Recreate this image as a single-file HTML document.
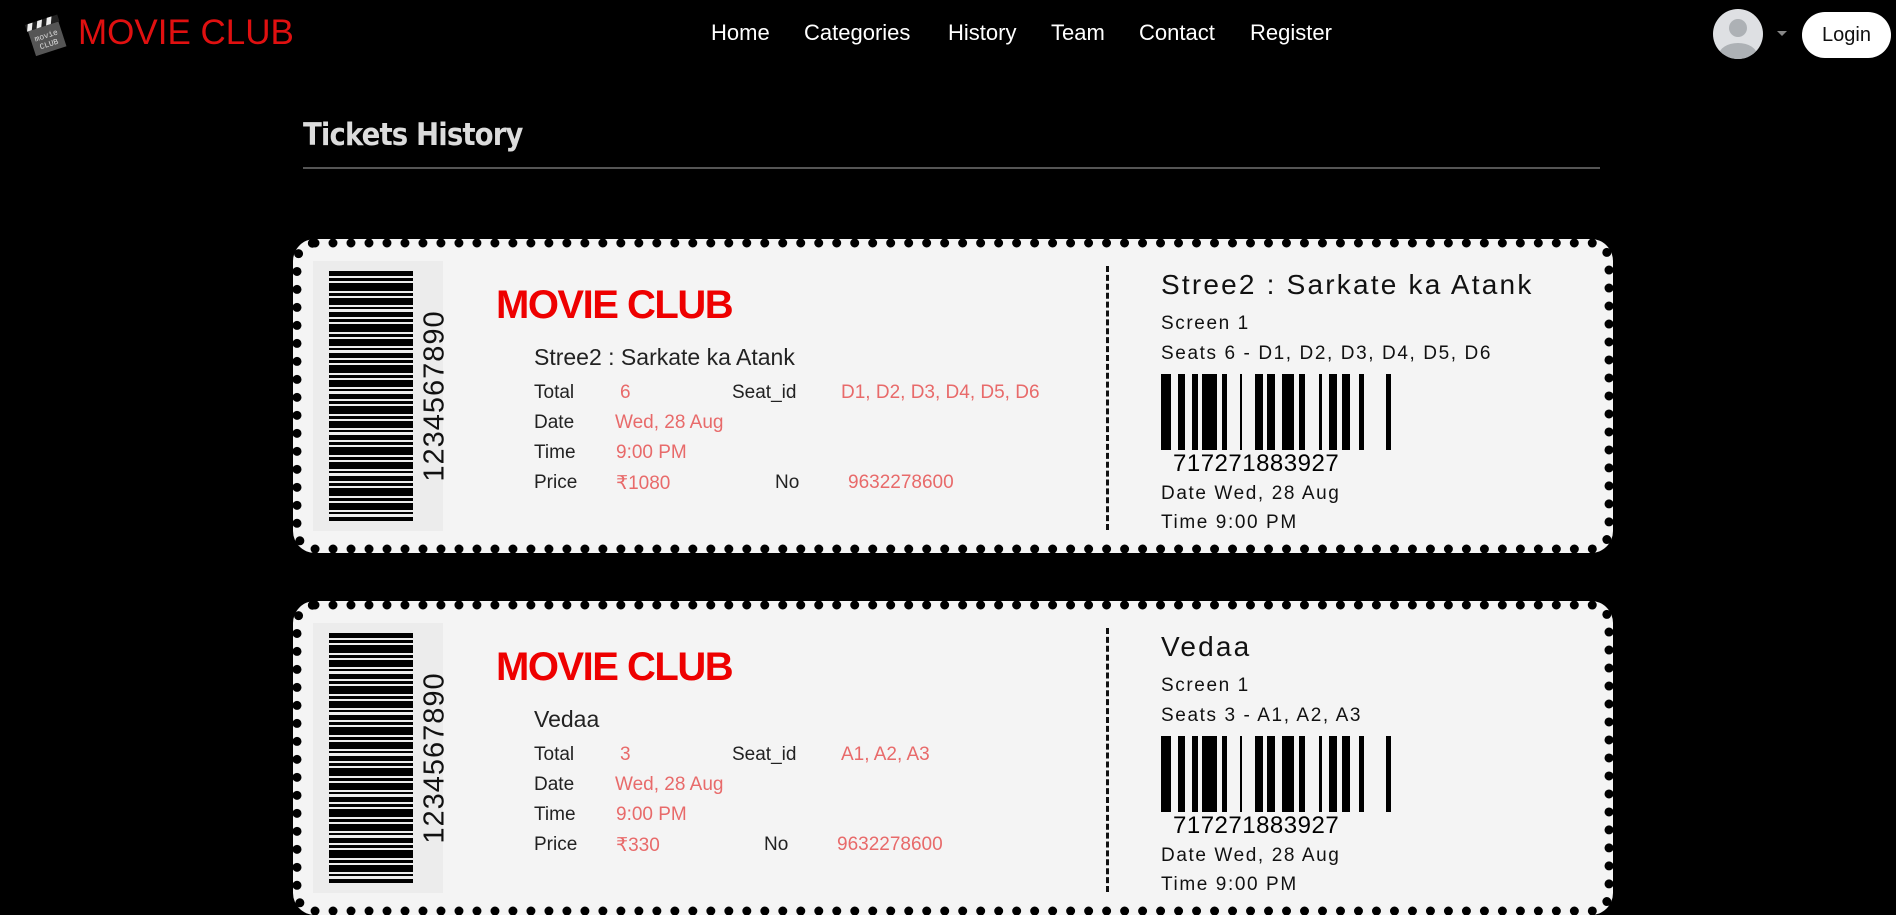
<!DOCTYPE html>
<html><head><meta charset="utf-8"><style>
*{margin:0;padding:0;box-sizing:border-box}
body{width:1896px;height:911px;background:#000;overflow:hidden;position:relative;font-family:"Liberation Sans",sans-serif}
.a{position:absolute;white-space:nowrap}
.nav{color:#fff;font-size:22px;top:20px}
.ticket{position:absolute;left:293px;width:1320px;height:314px;background:#f4f4f4;border:9px dotted #000;border-radius:22px}
.lb{position:absolute;left:11px;top:13px;width:130px;height:270px;background:#ececec}
.vbar{position:absolute;left:16px;top:10px;width:84px;height:250px;
background:repeating-linear-gradient(180deg,#000 0 5px,transparent 5px 7px,#000 7px 10px,transparent 10px 12px,#000 12px 20px,transparent 20px 22px,#000 22px 25px,transparent 25px 27px,#000 27px 34px,transparent 34px 36px,#000 36px 38px,transparent 38px 41px)}
.vnum{position:absolute;top:135px;transform:translate(-50%,-50%) rotate(-90deg);transform-origin:center;font-size:29px;color:#111;letter-spacing:1px;left:122px}
.mc{position:absolute;left:194px;top:35px;color:#e00;font-weight:bold;font-size:40px;letter-spacing:-1.5px}
.t{position:absolute;font-size:19px;color:#222}
.r{color:#e86a6a}
.dash{position:absolute;left:804px;top:18px;height:264px;border-left:3px dashed #111}
.rt{position:absolute;left:859px;color:#111;letter-spacing:1.6px}
</style></head><body>
<svg class="a" style="left:24px;top:12px" width="44" height="46" viewBox="0 0 44 46">
<g transform="rotate(-18 22 23)"><rect x="6" y="14" width="32" height="26" fill="#555"/><rect x="5" y="7" width="34" height="7" fill="#222"/>
<path d="M8 7h5l-3 7H5zM18 7h5l-3 7h-5zM28 7h5l-3 7h-5z" fill="#eee"/>
<text x="22" y="26" font-size="8" fill="#ddd" text-anchor="middle" font-family="Liberation Mono">movie</text>
<text x="22" y="35" font-size="8" fill="#ddd" text-anchor="middle" font-family="Liberation Mono">CLUB</text></g></svg>
<div class="a" style="left:78px;top:13px;color:#e01010;font-size:35px">MOVIE CLUB</div>
<div class="a nav" style="left:711px">Home</div>
<div class="a nav" style="left:804px">Categories</div>
<div class="a nav" style="left:948px">History</div>
<div class="a nav" style="left:1051px">Team</div>
<div class="a nav" style="left:1139px">Contact</div>
<div class="a nav" style="left:1250px">Register</div>
<svg class="a" style="left:1713px;top:9px" width="50" height="50" viewBox="0 0 50 50"><defs><clipPath id="c"><circle cx="25" cy="25" r="25"/></clipPath></defs><circle cx="25" cy="25" r="25" fill="#dee0e3"/><g clip-path="url(#c)" fill="#adb1b5"><circle cx="25" cy="19" r="9"/><ellipse cx="25" cy="46" rx="19" ry="12"/></g></svg>
<div class="a" style="left:1777px;top:31px;width:0;height:0;border-left:5px solid transparent;border-right:5px solid transparent;border-top:5px solid #888"></div>
<div class="a" style="left:1802px;top:12px;width:89px;height:46px;background:#fff;border-radius:23px;color:#111;font-size:20px;line-height:46px;text-align:center">Login</div>
<div class="a" style="left:303px;top:117px;color:#dcdcdc;font-size:31px;font-weight:bold;font-family:'DejaVu Sans',sans-serif;letter-spacing:-1px;transform:scaleX(0.89);transform-origin:left">Tickets History</div>
<div class="a" style="left:303px;top:167px;width:1297px;height:2px;background:#555"></div>

<div class="ticket" style="top:239px">
<div class="lb"><div class="vbar"></div><div class="vnum">1234567890</div></div>
<div class="mc">MOVIE CLUB</div>
<div class="t" style="left:232px;top:96px;font-size:23px">Stree2 : Sarkate ka Atank</div>
<div class="t" style="left:232px;top:134px">Total</div><div class="t r" style="left:318px;top:134px">6</div>
<div class="t" style="left:430px;top:134px">Seat_id</div><div class="t r" style="left:539px;top:134px">D1, D2, D3, D4, D5, D6</div>
<div class="t" style="left:232px;top:164px">Date</div><div class="t r" style="left:313px;top:164px">Wed, 28 Aug</div>
<div class="t" style="left:232px;top:194px">Time</div><div class="t r" style="left:314px;top:194px">9:00 PM</div>
<div class="t" style="left:232px;top:224px">Price</div><div class="t r" style="left:314px;top:224px">₹1080</div>
<div class="t" style="left:473px;top:224px">No</div><div class="t r" style="left:546px;top:224px">9632278600</div>
<div class="dash"></div>
<div class="rt" style="top:21px;font-size:28px;letter-spacing:2.2px">Stree2 : Sarkate ka Atank</div>
<div class="rt" style="top:65px;font-size:19px">Screen 1</div>
<div class="rt" style="top:95px;font-size:19px">Seats 6 - D1, D2, D3, D4, D5, D6</div>
<svg style="position:absolute;left:859px;top:126px" width="240" height="105"><g fill="#000"><rect x="0" y="0" width="10" height="76"/><rect x="17" y="0" width="7" height="76"/><rect x="31" y="0" width="6" height="76"/><rect x="41" y="0" width="15" height="76"/><rect x="61" y="0" width="5" height="76"/><rect x="79" y="0" width="2" height="76"/><rect x="94" y="0" width="8" height="76"/><rect x="106" y="0" width="8" height="76"/><rect x="121" y="0" width="12" height="76"/><rect x="138" y="0" width="6" height="76"/><rect x="158" y="0" width="3" height="76"/><rect x="168" y="0" width="8" height="76"/><rect x="181" y="0" width="8" height="76"/><rect x="198" y="0" width="5" height="76"/><rect x="225" y="0" width="5" height="76"/></g><text x="12" y="97" font-size="24" font-family="Liberation Sans" letter-spacing="0.5">717271883927</text></svg>
<div class="rt" style="top:235px;font-size:19px">Date Wed, 28 Aug</div>
<div class="rt" style="top:264px;font-size:19px">Time 9:00 PM</div>
</div>

<div class="ticket" style="top:601px">
<div class="lb"><div class="vbar"></div><div class="vnum">1234567890</div></div>
<div class="mc">MOVIE CLUB</div>
<div class="t" style="left:232px;top:96px;font-size:23px">Vedaa</div>
<div class="t" style="left:232px;top:134px">Total</div><div class="t r" style="left:318px;top:134px">3</div>
<div class="t" style="left:430px;top:134px">Seat_id</div><div class="t r" style="left:539px;top:134px">A1, A2, A3</div>
<div class="t" style="left:232px;top:164px">Date</div><div class="t r" style="left:313px;top:164px">Wed, 28 Aug</div>
<div class="t" style="left:232px;top:194px">Time</div><div class="t r" style="left:314px;top:194px">9:00 PM</div>
<div class="t" style="left:232px;top:224px">Price</div><div class="t r" style="left:314px;top:224px">₹330</div>
<div class="t" style="left:462px;top:224px">No</div><div class="t r" style="left:535px;top:224px">9632278600</div>
<div class="dash"></div>
<div class="rt" style="top:21px;font-size:28px;letter-spacing:2.2px">Vedaa</div>
<div class="rt" style="top:65px;font-size:19px">Screen 1</div>
<div class="rt" style="top:95px;font-size:19px">Seats 3 - A1, A2, A3</div>
<svg style="position:absolute;left:859px;top:126px" width="240" height="105"><g fill="#000"><rect x="0" y="0" width="10" height="76"/><rect x="17" y="0" width="7" height="76"/><rect x="31" y="0" width="6" height="76"/><rect x="41" y="0" width="15" height="76"/><rect x="61" y="0" width="5" height="76"/><rect x="79" y="0" width="2" height="76"/><rect x="94" y="0" width="8" height="76"/><rect x="106" y="0" width="8" height="76"/><rect x="121" y="0" width="12" height="76"/><rect x="138" y="0" width="6" height="76"/><rect x="158" y="0" width="3" height="76"/><rect x="168" y="0" width="8" height="76"/><rect x="181" y="0" width="8" height="76"/><rect x="198" y="0" width="5" height="76"/><rect x="225" y="0" width="5" height="76"/></g><text x="12" y="97" font-size="24" font-family="Liberation Sans" letter-spacing="0.5">717271883927</text></svg>
<div class="rt" style="top:235px;font-size:19px">Date Wed, 28 Aug</div>
<div class="rt" style="top:264px;font-size:19px">Time 9:00 PM</div>
</div>
</body></html>
